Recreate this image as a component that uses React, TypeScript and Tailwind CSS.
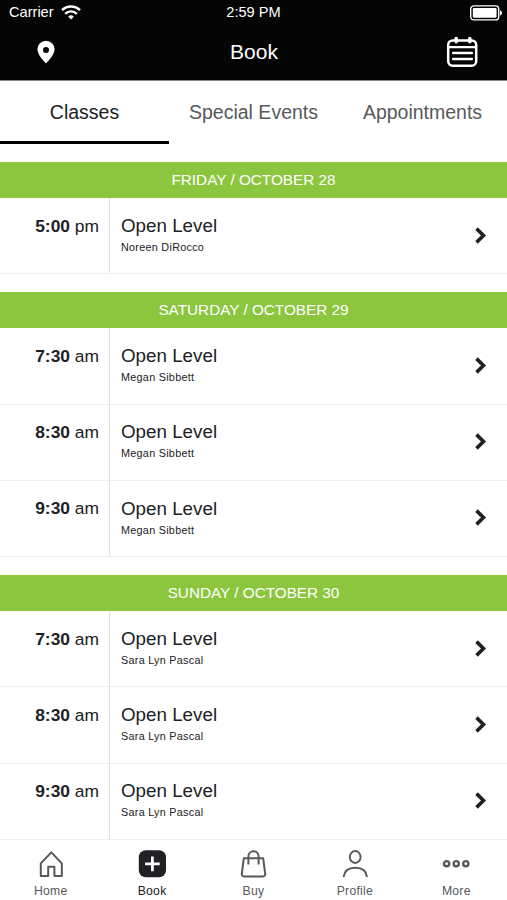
import React from 'react';

interface ClassSession {
  time: string;
  period: 'am' | 'pm';
  name: string;
  instructor: string;
}

interface ScheduleDay {
  label: string;
  sessions: ClassSession[];
}

const schedule: ScheduleDay[] = [
  {
    label: 'FRIDAY / OCTOBER 28',
    sessions: [{ time: '5:00', period: 'pm', name: 'Open Level', instructor: 'Noreen DiRocco' }],
  },
  {
    label: 'SATURDAY / OCTOBER 29',
    sessions: [
      { time: '7:30', period: 'am', name: 'Open Level', instructor: 'Megan Sibbett' },
      { time: '8:30', period: 'am', name: 'Open Level', instructor: 'Megan Sibbett' },
      { time: '9:30', period: 'am', name: 'Open Level', instructor: 'Megan Sibbett' },
    ],
  },
  {
    label: 'SUNDAY / OCTOBER 30',
    sessions: [
      { time: '7:30', period: 'am', name: 'Open Level', instructor: 'Sara Lyn Pascal' },
      { time: '8:30', period: 'am', name: 'Open Level', instructor: 'Sara Lyn Pascal' },
      { time: '9:30', period: 'am', name: 'Open Level', instructor: 'Sara Lyn Pascal' },
    ],
  },
];

const tabs = ['Classes', 'Special Events', 'Appointments'];

const StatusBar: React.FC = () => (
  <div className="grid h-6 grid-cols-3 items-center text-[14.6px]">
    <div className="flex items-center gap-[7px] pl-[9px]">
      <span className="pt-0.5">Carrier</span>
      <svg className="mt-0.5 h-[15px] w-5" viewBox="0 0 20 15" fill="none" stroke="currentColor" strokeWidth={2.4}>
        <path d="M1 5.2a12.8 12.8 0 0 1 18 0M4.2 8.8a8.2 8.2 0 0 1 11.6 0" />
        <path d="M10 14.5l-2.8-2.8a4 4 0 0 1 5.6 0z" fill="currentColor" stroke="none" />
      </svg>
    </div>
    <span className="pt-0.5 text-center">2:59 PM</span>
    <div className="flex justify-end pt-px pr-[5px]">
      <svg className="h-4 w-8" viewBox="0 0 32 16" fill="none">
        <rect x="0.7" y="0.9" width="28" height="14" rx="3.2" stroke="currentColor" strokeWidth={1.4} />
        <rect x="2.8" y="3" width="23.8" height="9.8" rx="1.2" fill="currentColor" />
        <path d="M30 5.2c2.6 1 2.6 4.4 0 5.4z" fill="currentColor" />
      </svg>
    </div>
  </div>
);

const Header: React.FC = () => (
  <header className="h-[81px] shrink-0 border-b border-[#858585] bg-[#050505] text-white">
    <StatusBar />
    <div className="flex h-14 items-center justify-between pr-[29px] pl-[37px]">
      <button aria-label="Locations">
        <svg className="h-6 w-[18px]" viewBox="0 0 18 24" fill="currentColor">
          <path
            fillRule="evenodd"
            d="M9 .7a8.6 8.6 0 0 0-8.6 8.6C.4 15.4 9 23.4 9 23.4s8.6-8 8.6-14.1A8.6 8.6 0 0 0 9 .7zm0 6.2a3 3 0 1 1 0 6 3 3 0 0 1 0-6z"
          />
        </svg>
      </button>
      <h1 className="pl-[7px] text-[21px]">Book</h1>
      <button aria-label="Calendar">
        <svg className="h-8 w-8" viewBox="0 0 32 32" fill="none" stroke="currentColor" strokeLinecap="round">
          <rect x="2.2" y="4.4" width="28" height="25.4" rx="4.5" strokeWidth={2.5} />
          <path d="M2.5 11.2h27.4" strokeWidth={2.2} />
          <path d="M10.2 2.6v3.2M23.8 2.6v3.2" strokeWidth={3.6} />
          <path d="M7.2 17.1h18.6M7.2 23.1h18.6" strokeWidth={2.5} />
        </svg>
      </button>
    </div>
  </header>
);

const SessionRow: React.FC<{ session: ClassSession }> = ({ session }) => (
  <li className="flex h-[76.2px] border-b border-[#eeefef]">
    <div className="w-[110px] border-r border-[#dfe3e4] pt-[13.5px] pr-[10px] text-right text-[17.4px] leading-7">
      <span className="font-bold">{session.time}</span> {session.period}
    </div>
    <div className="flex-1 pt-[13.8px] pl-[11px]">
      <p className="text-[18.8px] leading-7">{session.name}</p>
      <p className="text-[10.8px] leading-[15.5px] tracking-[0.28px]">{session.instructor}</p>
    </div>
    <svg className="mt-[28.5px] mr-[20px] h-[17px] w-3" viewBox="0 0 12 17" fill="none" stroke="currentColor" strokeWidth={3.6}>
      <path d="M1.5 1.6l7 6.9-7 6.9" />
    </svg>
  </li>
);

const iconProps = {
  className: 'h-8 w-8',
  viewBox: '0 0 32 32',
  fill: 'none',
  stroke: 'currentColor',
  strokeWidth: 2,
};

const HomeIcon = () => (
  <svg {...iconProps} strokeLinejoin="round">
    <path d="M5.8 15.4L16.3 4.4l10.5 11v12.5h-7.4v-9.2h-6.2v9.2H5.8z" />
  </svg>
);

const BookIcon = () => (
  <svg {...iconProps}>
    <rect x="2.8" y="2.2" width="27.2" height="27" rx="7" fill="currentColor" stroke="none" />
    <path d="M16.4 8.6v14.6M9.1 15.9h14.6" stroke="white" strokeWidth={2.8} />
  </svg>
);

const BuyIcon = () => (
  <svg {...iconProps} strokeLinejoin="round">
    <path d="M6.8 10.3h19.4l2 15.5a2.2 2.2 0 0 1-2.2 2.6H7a2.2 2.2 0 0 1-2.2-2.6z" />
    <path d="M11.4 16.5V8.4a5.1 5.1 0 0 1 10.2 0v8.1" />
  </svg>
);

const ProfileIcon = () => (
  <svg {...iconProps}>
    <ellipse cx="16.2" cy="9" rx="5.4" ry="5.9" />
    <path d="M4.6 29c.6-5.8 5-9.2 11.7-9.2S27.4 23.2 28 29" />
  </svg>
);

const MoreIcon = () => (
  <svg {...iconProps} strokeWidth={2.4}>
    <circle cx="6.6" cy="15.7" r="2.6" />
    <circle cx="16.2" cy="15.7" r="2.6" />
    <circle cx="25.8" cy="15.7" r="2.6" />
  </svg>
);

const navItems = [
  { label: 'Home', icon: HomeIcon },
  { label: 'Book', icon: BookIcon },
  { label: 'Buy', icon: BuyIcon },
  { label: 'Profile', icon: ProfileIcon },
  { label: 'More', icon: MoreIcon },
];

const App: React.FC = () => {
  const [activeTab, setActiveTab] = React.useState('Classes');

  return (
    <div className="flex h-[900px] w-[507px] flex-col overflow-hidden bg-white font-['Liberation_Sans',Arial,sans-serif] text-[#202124]">
      <Header />

      {/* Category tabs */}
      <div className="grid h-[63px] shrink-0 grid-cols-3 text-[19.5px]">
        {tabs.map((tab) => (
          <button
            key={tab}
            onClick={() => setActiveTab(tab)}
            className={
              tab === activeTab
                ? 'border-b-[3px] border-black pt-[3px] text-[#202124]'
                : 'border-b-[3px] border-transparent pt-[3px] text-[#58595b]'
            }
          >
            {tab}
          </button>
        ))}
      </div>

      {/* Schedule */}
      <main className="min-h-0 flex-1 overflow-hidden">
        {schedule.map((day) => (
          <section key={day.label} className="pt-[18.15px]">
            <h2 className="flex h-9 items-center justify-center bg-[#8cc63f] text-[15.3px] leading-6 text-white">{day.label}</h2>
            <ul>
              {day.sessions.map((session) => (
                <SessionRow key={session.time} session={session} />
              ))}
            </ul>
          </section>
        ))}
      </main>

      {/* Bottom navigation */}
      <nav className="grid h-[61px] shrink-0 grid-cols-5 border-t border-[#eeeeee] bg-white pt-2">
        {navItems.map(({ label, icon: Icon }) => (
          <button
            key={label}
            className={
              label === 'Book'
                ? 'flex flex-col items-center text-[#202124]'
                : 'flex flex-col items-center text-[#58595b]'
            }
          >
            <Icon />
            <span className="pt-px text-[12.2px] leading-5 tracking-[0.25px]">{label}</span>
          </button>
        ))}
      </nav>
    </div>
  );
};

export default App;
